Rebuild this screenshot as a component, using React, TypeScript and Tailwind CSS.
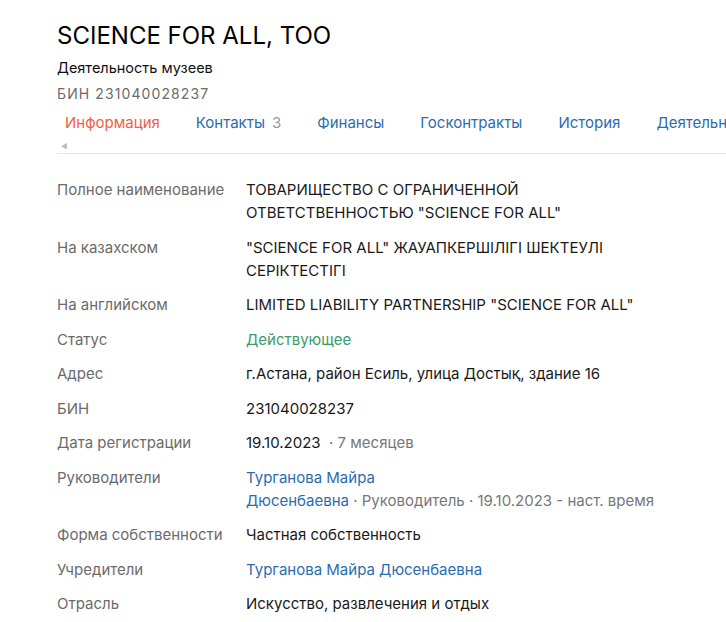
const rows: { label: string; value: React.ReactNode }[] = [
  {
    label: "Полное наименование",
    value: (
      <>
        ТОВАРИЩЕСТВО С ОГРАНИЧЕННОЙ
        <br />
        ОТВЕТСТВЕННОСТЬЮ "SCIENCE FOR ALL"
      </>
    ),
  },
  {
    label: "На казахском",
    value: (
      <>
        "SCIENCE FOR ALL" ЖАУАПКЕРШІЛІГІ ШЕКТЕУЛІ
        <br />
        СЕРІКТЕСТІГІ
      </>
    ),
  },
  { label: "На английском", value: 'LIMITED LIABILITY PARTNERSHIP "SCIENCE FOR ALL"' },
  { label: "Статус", value: <span className="text-[#3d9a6c]">Действующее</span> },
  { label: "Адрес", value: "г.Астана, район Есиль, улица Достық, здание 16" },
  { label: "БИН", value: "231040028237" },
  {
    label: "Дата регистрации",
    value: (
      <>
        19.10.2023 <span className="text-[#777]">&nbsp;· 7 месяцев</span>
      </>
    ),
  },
  {
    label: "Руководители",
    value: (
      <>
        <span className="text-[#2b6cb0]">Турганова Майра</span>
        <br />
        <span className="text-[#2b6cb0]">Дюсенбаевна</span>
        <span className="text-[#777]"> · Руководитель · 19.10.2023 - наст. время</span>
      </>
    ),
  },
  { label: "Форма собственности", value: "Частная собственность" },
  {
    label: "Учредители",
    value: <span className="text-[#2b6cb0]">Турганова Майра Дюсенбаевна</span>,
  },
  { label: "Отрасль", value: "Искусство, развлечения и отдых" },
];

const tabs = ["Информация", "Контакты", "Финансы", "Госконтракты", "История", "Деятельность"];

export default function App() {
  return (
    <div className="w-[726px] h-[622px] overflow-hidden bg-white font-['Inter',sans-serif] text-[#1a1a1a]">
      <div className="pl-[57px] pt-[20px]">
        <h1 className="text-[24px] leading-[32px] font-normal text-black">SCIENCE FOR ALL, TOO</h1>
        <div className="mt-[6px] text-[14.5px] leading-[20px] text-[#111]">Деятельность музеев</div>
        <div className="mt-[6px] text-[14px] leading-[20px] tracking-[1.1px] text-[#6b6b6b]">БИН 231040028237</div>

        <div className="mt-[9px] flex gap-[36px] pl-[8px] whitespace-nowrap text-[15px] leading-[20px] overflow-hidden">
          {tabs.map((t, i) => (
            <span key={t} className={i === 0 ? "text-[#f2613f]" : "text-[#2b6cb0]"}>
              {t}
              {t === "Контакты" && <span className="ml-[7px] text-[#999]">3</span>}
            </span>
          ))}
        </div>
        <div className="mt-[7px] h-[13px] pl-[4px] text-[7px] leading-[13px] text-[#bbb]">◀</div>
        <div className="border-b border-[#e5e5e5]" />

        <div className="mt-[24px] flex flex-col gap-[11.5px] text-[15px] leading-[23px]">
          {rows.map((r) => (
            <div key={r.label} className="flex">
              <div className="w-[189px] shrink-0 text-[#6b6b6b]">{r.label}</div>
              <div className="text-[#1a1a1a]">{r.value}</div>
            </div>
          ))}
        </div>
      </div>
    </div>
  );
}
